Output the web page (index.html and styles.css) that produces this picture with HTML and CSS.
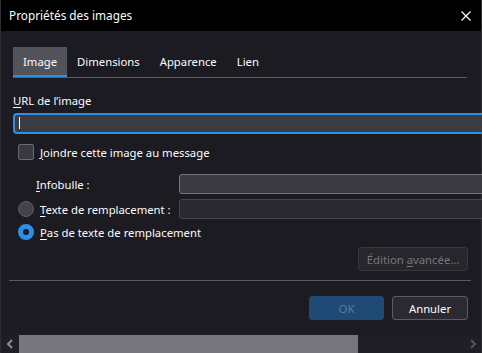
FILE: index.html
```html
<!DOCTYPE html>
<html lang="fr">
<head>
  <meta charset="UTF-8">
  <meta name="viewport" content="width=device-width, initial-scale=1.0">
  <title>Propriétés des images</title>
  <link rel="stylesheet" href="styles.css">
</head>
<body>
  <div class="window">
    <div class="titlebar">
      <span class="title">Propriétés des images</span>
      <svg class="close" width="10" height="10" viewBox="0 0 10 10">
        <path d="M0.5 0.5 L9.5 9.5 M9.5 0.5 L0.5 9.5" stroke="#fff" stroke-width="1.2" fill="none"/>
      </svg>
    </div>

    <div class="dialog">
      <div class="tabs">
        <div class="tab selected">Image</div>
        <div class="tab">Dimensions</div>
        <div class="tab">Apparence</div>
        <div class="tab">Lien</div>
      </div>

      <div class="panel">
        <label class="field-label"><u>U</u>RL de l’image</label>
        <div class="url-input"><span class="caret"></span></div>

        <div class="check-row">
          <span class="checkbox"></span>
          <span><u>J</u>oindre cette image au message</span>
        </div>

        <div class="grid-row tooltip-row">
          <span class="indent-label"><u>I</u>nfobulle :</span>
          <div class="text-input"></div>
        </div>

        <div class="grid-row alt-row">
          <span class="radio-label">
            <span class="radio"></span>
            <span><u>T</u>exte de remplacement :</span>
          </span>
          <div class="text-input disabled"></div>
        </div>

        <div class="check-row no-alt">
          <span class="radio checked"></span>
          <span><u>P</u>as de texte de remplacement</span>
        </div>

        <div class="advanced-row">
          <button class="btn advanced">Édition <u>a</u>vancée…</button>
        </div>
      </div>

      <div class="separator"></div>

      <div class="actions">
        <button class="btn ok">OK</button>
        <button class="btn cancel">Annuler</button>
      </div>

      <div class="scrollbar">
        <span class="arrow">
          <svg width="8" height="10" viewBox="0 0 8 10"><path d="M6 1 L2 5 L6 9" stroke="#8e8d93" stroke-width="2" fill="none"/></svg>
        </span>
        <span class="thumb"></span>
        <span class="track"></span>
        <span class="arrow">
          <svg width="8" height="10" viewBox="0 0 8 10"><path d="M2 1 L6 5 L2 9" stroke="#55545a" stroke-width="2" fill="none"/></svg>
        </span>
      </div>
    </div>
  </div>
</body>
</html>
```

FILE: styles.css
```css
* {
  box-sizing: border-box;
}

html, body {
  margin: 0;
  width: 482px;
  height: 353px;
  overflow: hidden;
  background: #1c1b22;
}

body {
  font-family: "Noto Sans", "Open Sans", sans-serif;
  font-size: 11.3px;
  color: #fbfbfe;
  white-space: nowrap;
}

u {
  text-decoration-thickness: 1px;
  text-underline-offset: 2px;
}

.window {
  display: flex;
  flex-direction: column;
  height: 353px;
  border-left: 1px solid #2e2d33;
  border-right: 1px solid #2e2d33;
}

.titlebar {
  height: 31px;
  flex: none;
  background: #000;
  display: flex;
  align-items: center;
  justify-content: space-between;
  padding: 0 10px 0 8px;
  font-size: 11.8px;
}

.title {
  margin-top: -1px;
}

.dialog {
  flex: 1;
  display: flex;
  flex-direction: column;
  background: #1c1b22;
  min-height: 0;
}

.tabs {
  display: flex;
  flex: none;
  margin: 16px 0 0 12px;
  width: 454px;
  border-bottom: 1px solid #5b5a63;
}

.tab {
  height: 30px;
  padding: 0 10px;
  line-height: 29px;
  border-bottom: 2px solid transparent;
}

.tab.selected {
  background: #52525a;
  border-bottom-color: #2f8ee5;
}

.panel {
  padding-left: 12px;
  display: flex;
  flex-direction: column;
  flex: none;
}

.field-label {
  margin-top: 15px;
  line-height: 16px;
  height: 20px;
}

.url-input {
  width: 500px;
  height: 21px;
  flex: none;
  border: 2px solid #2f8ee5;
  border-radius: 4px;
  background: #3c3c43;
  padding: 2px 0 0 4px;
}

.caret {
  display: block;
  width: 1px;
  height: 12px;
  background: #fbfbfe;
}

.check-row {
  display: flex;
  align-items: center;
  height: 16px;
  margin-top: 10px;
  gap: 6px;
  padding-left: 5px;
}

.checkbox {
  width: 16px;
  height: 16px;
  flex: none;
  border: 1px solid #6c6b72;
  border-radius: 2px;
  background: #3a3940;
}

.grid-row {
  display: flex;
  align-items: center;
}

.tooltip-row {
  margin-top: 14px;
}

.alt-row {
  margin-top: 5px;
}

.indent-label {
  width: 166px;
  flex: none;
  padding-left: 23px;
}

.radio-label {
  width: 166px;
  flex: none;
  display: flex;
  align-items: center;
  gap: 6px;
  padding-left: 5px;
}

.radio {
  width: 16px;
  height: 16px;
  border-radius: 50%;
  border: 1px solid #5e5d64;
  background: #44434a;
  flex: none;
}

.radio.checked {
  border: 5px solid #2f8ee5;
  background: #1c1b22;
}

.text-input {
  width: 320px;
  height: 20px;
  flex: none;
  border: 1px solid #75747b;
  border-radius: 3px;
  background: #3b3a41;
}

.text-input.disabled {
  border-color: #46454c;
  background: #2a2930;
}

.no-alt {
  margin-top: 5px;
}

.advanced-row {
  display: flex;
  justify-content: flex-end;
  width: 455px;
  margin-top: 7px;
}

.btn {
  font-family: inherit;
  font-size: 11.3px;
  height: 24px;
  border-radius: 3px;
  padding: 0;
}

.advanced {
  width: 110px;
  background: #27262d;
  border: 1px solid #38373e;
  color: #77767d;
}

.separator {
  height: 1px;
  flex: none;
  background: #5b5a63;
  margin: 9px 10px 0 8px;
}

.actions {
  display: flex;
  flex: none;
  justify-content: flex-end;
  gap: 8px;
  margin: 15px 13px 0 0;
}

.ok {
  width: 75px;
  background: #1e4a75;
  border: 1px solid #1e4a75;
  color: #5b7c9c;
}

.cancel {
  width: 76px;
  background: #2b2a33;
  border: 1px solid #5b5a63;
  color: #fbfbfe;
}

.scrollbar {
  margin-top: auto;
  height: 18px;
  flex: none;
  display: flex;
  background: #1f1e24;
}

.arrow {
  width: 17px;
  display: flex;
  align-items: center;
  justify-content: center;
}

.thumb {
  width: 339px;
  margin-left: 1px;
  background: #77767c;
}

.track {
  flex: 1;
}
```
